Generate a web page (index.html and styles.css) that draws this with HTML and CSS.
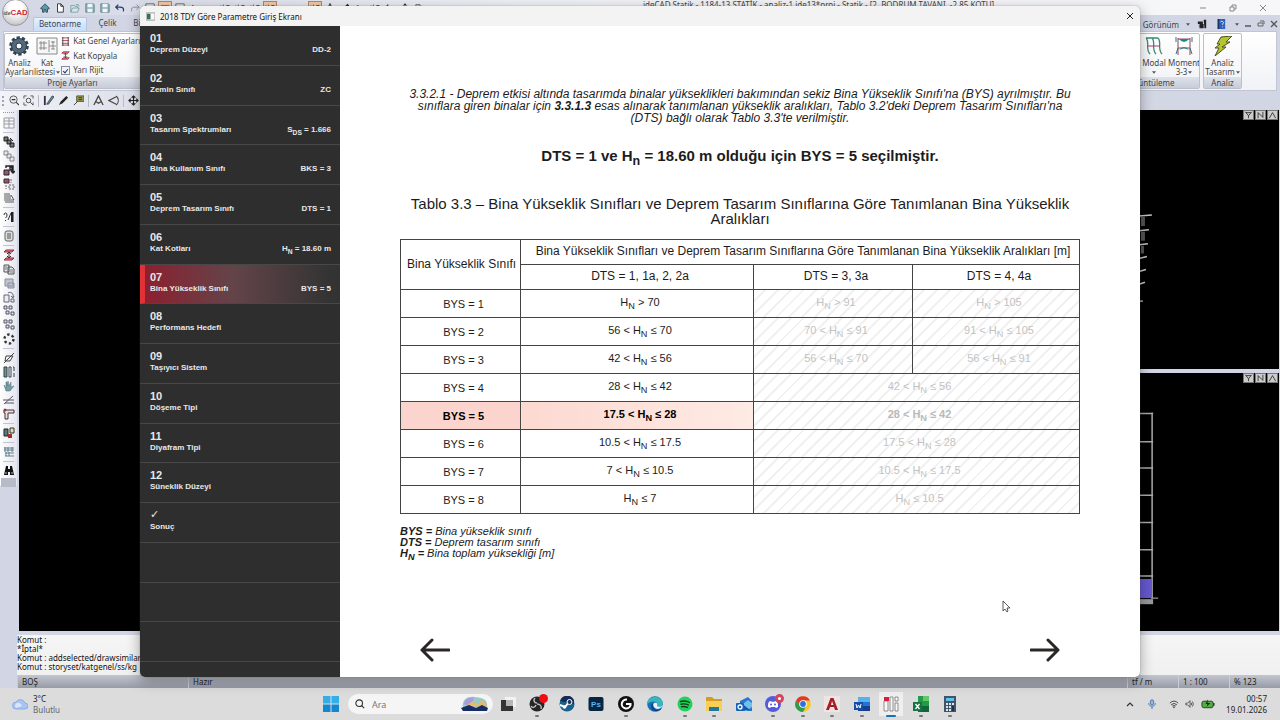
FILE: index.html
```html
<!DOCTYPE html>
<html lang="tr">
<head>
    <meta charset="UTF-8">
    <meta name="viewport" content="width=device-width, initial-scale=1.0">
    <title>2018 TDY Göre Parametre Giriş Ekranı</title>
    <link rel="stylesheet" href="styles.css">
</head>
<body>
    <svg class="sprite" aria-hidden="true">
        <symbol id="caret" viewBox="0 0 6 4"><path d="M0 0h6L3 4z" fill="#555"/></symbol>
        <symbol id="home" viewBox="0 0 12 12"><path d="M1 6 6 1l5 5v1H9v4H7V8H5v3H3V7H1z" fill="#5f9aa5" stroke="#25475a"/></symbol>
        <symbol id="page" viewBox="0 0 12 12"><path d="M3 1h4l3 3v7H3zM7 1v3h3" fill="#fff" stroke="#222"/></symbol>
        <symbol id="open" viewBox="0 0 12 12"><path d="M1 11V3h4l1 1h3v2M1 11l2-5h8l-2 5zM7 2h3l1 2" fill="#d5e7e8" stroke="#739aa0"/></symbol>
        <symbol id="save" viewBox="0 0 12 12"><path d="M1 1h9l1 1v9H1z" fill="#8eb5ba" stroke="#547a82"/><path d="M3 1h6v4H3zM3 7h6v4H3z" fill="#eef5f6"/></symbol>
        <symbol id="undo" viewBox="0 0 12 12"><path d="M4 2 1 5l3 3M1 5h5c3 0 5 1 4 5" fill="none" stroke="#263d6e" stroke-width="1.5"/></symbol>
        <symbol id="redo" viewBox="0 0 12 12"><path d="M8 2l3 3-3 3M11 5H6c-3 0-5 1-4 5" fill="none" stroke="#8b92a3" stroke-width="1.2"/></symbol>
        <symbol id="box" viewBox="0 0 12 12"><path d="M1 1h10v10H1z" fill="#eceef4" stroke="#555"/><path d="M3 8l3-4 3 3" fill="none" stroke="#666"/></symbol>
        <symbol id="beam" viewBox="0 0 12 12"><path d="M1 3h10v3H1z" fill="#3a1c18"/><path d="M2 7v4M10 7v4" stroke="#333"/></symbol>
        <symbol id="arrow" viewBox="0 0 12 12"><path d="M0 7h11M8 4l3 3-3 3" fill="none" stroke="#722" stroke-width="1.5"/></symbol>
        <symbol id="corner" viewBox="0 0 12 12"><path d="M3 3v7h8M3 3l2 2" fill="none" stroke="#333" stroke-width="1.4"/></symbol>
        <symbol id="dims" viewBox="0 0 12 12"><path d="M1 3v6M4 2v7M0 6h6M8 3h3v5H8z" fill="none" stroke="#344"/></symbol>
        <symbol id="sheet" viewBox="0 0 12 12"><path d="M1 1h10v10H1zM1 4h10M1 7h10M6 1v10" fill="#f7f7f9" stroke="#9a9ca4"/></symbol>
        <symbol id="cubes" viewBox="0 0 12 12"><path d="M1 1h4v4H1zM4 4h4v4H4zM7 7h4v4H7z" fill="#777" stroke="#222"/><path d="M7 2l3 3" stroke="#222"/></symbol>
        <symbol id="cubes-light" viewBox="0 0 12 12"><path d="M1 1h4v4H1zM4 4h4v4H4zM7 7h4v4H7z" fill="#e6e8ee" stroke="#888"/></symbol>
        <symbol id="shift" viewBox="0 0 12 12"><path d="M1 6h5v5H1z" fill="#957" stroke="#222"/><path d="M3 4V2h7v7M8 7l2 2 2-2M7 3h2v3H7z" fill="none" stroke="#222" stroke-width="1.4"/></symbol>
        <symbol id="mirror" viewBox="0 0 12 12"><path d="M1 1h5v4H1z" fill="#a45060" stroke="#333"/><path d="M6 7h5v4H6zM8 1v4M3 7v4" fill="#e8e8ee" stroke="#666" stroke-dasharray="2 1"/></symbol>
        <symbol id="lines" viewBox="0 0 12 12"><path d="M1 2h6M1 4h7M1 6h7M1 8h10M2 10h9" fill="none" stroke="#333" stroke-width=".8"/><path d="M8 3l3 5" stroke="#555"/></symbol>
        <symbol id="query" viewBox="0 0 12 12"><path d="M1 4q0-2 1.500-2T4 4 2.500 7M2.500 9v1M8 2 5 9" fill="none" stroke="#333"/><path d="M8 1h2v10H8z" fill="#222"/><path d="M10 1h1v10h-1z" fill="#8c8d34"/></symbol>
        <symbol id="scroll" viewBox="0 0 12 12"><rect x="2" y="1" width="8" height="10" rx="2" fill="#ddd" stroke="#666"/><path d="M4 4h4M4 6h4M4 8h4" stroke="#555"/></symbol>
        <symbol id="storey" viewBox="0 0 12 12"><path d="M3 1h8L9 3H1zM3 9h8l-2 2H1z" fill="#e08090" stroke="#a22438"/><path d="M6 3v6M4 5l2-2 2 2M4 7l2 2 2-2" fill="none" stroke="#333"/></symbol>
        <symbol id="copy" viewBox="0 0 12 12"><path d="M1 2h5v7H1zM5 4h4l2 2v5H5z" fill="#e4e6ec" stroke="#555"/><path d="M2 4h2M2 6h2M7 7h3M7 9h3" stroke="#777"/></symbol>
        <symbol id="copy-dim" viewBox="0 0 12 12"><path d="M2 2h8v7H2zM5 6h6v5H5z" fill="#bfc3ce" stroke="#8b90a0"/></symbol>
        <symbol id="rotate" viewBox="0 0 12 12"><path d="M1 4h5v7H1z" fill="#ececf2" stroke="#667"/><path d="M5 2c3-2 6 1 5 4M8 5l2 2 1-2M8 8h3v3H8z" fill="none" stroke="#667"/></symbol>
        <symbol id="array" viewBox="0 0 12 12"><path d="M1 1h3v3H1zM6 1h3v3H6zM3 6h3v3H3zM8 7h3v3H8z" fill="#dfe2e9" stroke="#556"/></symbol>
        <symbol id="ring" viewBox="0 0 12 12"><circle cx="6" cy="6" r="4.500" fill="none" stroke="#333" stroke-width="2.400" stroke-dasharray="2.400 2.300"/></symbol>
        <symbol id="trim" viewBox="0 0 12 12"><path d="M1 11 11 1M3 4h7L7 9H2z" fill="none" stroke="#444"/></symbol>
        <symbol id="panel" viewBox="0 0 12 12"><path d="M1 1h3v10H1z" fill="#739090" stroke="#344"/><path d="M6 1h2v10H6zM10 1h1v4M11 7v4" fill="#fff" stroke="#344"/></symbol>
        <symbol id="hand" viewBox="0 0 12 12"><path d="M1 5 3 8V2h1v4l1-5 1 5 2-4v5l3-1-4 5H3z" fill="#799ca3" stroke="#4b7078" stroke-width=".5"/></symbol>
        <symbol id="extend" viewBox="0 0 12 12"><path d="M1 10 10 2M0 6h11M2 9h9" fill="none" stroke="#556"/></symbol>
        <symbol id="tee" viewBox="0 0 12 12"><path d="M1 2h10v3H5v6H2V5H1z" fill="#eadde0" stroke="#433"/><circle cx="2" cy="2" r="1.500" fill="#a03848"/></symbol>
        <symbol id="render" viewBox="0 0 12 12"><path d="M1 2h4v7H1z" fill="#557b7d" stroke="#222"/><path d="M7 1h4v5H7z" fill="#dedfad" stroke="#333"/><path d="M5 7h4v4H5z" fill="#9b3024"/></symbol>
        <symbol id="metraj" viewBox="0 0 12 12"><path d="M1 2h10M1 4h10M2 7h9M2 10h9M2 1v5M5 1v5M9 1v5M3 6v4M6 6v4" stroke="#52757f" stroke-width=".9"/></symbol>
        <symbol id="find" viewBox="0 0 12 12"><path d="M3 1h2v3h2V1h2l2 9H7V7H5v3H1z" fill="#111"/><path d="M2 8h2M8 8h2" stroke="#bbb"/></symbol>
        <symbol id="zoom" viewBox="0 0 12 12"><circle cx="6" cy="5" r="4" fill="#e8ebf2" stroke="#555"/><path d="M9 8l3 3M4 5h4" stroke="#333" stroke-width="1.200"/></symbol>
        <symbol id="zoom-all" viewBox="0 0 12 12"><path d="M1 4V1h3M8 1h3v3M11 8v3M1 8v3h3" fill="none" stroke="#555"/><circle cx="6" cy="6" r="2.500" fill="none" stroke="#444"/><path d="M8 8l3 3" stroke="#444"/></symbol>
        <symbol id="pens" viewBox="0 0 12 12"><path d="M1 1h2v10H1z" fill="#334"/><path d="M4 10 10 1l2 1-6 8z" fill="#688" stroke="#223" stroke-width=".7"/></symbol>
        <symbol id="pen" viewBox="0 0 12 12"><path d="M1 11 3 7l6-6 2 2-6 6z" fill="#222"/></symbol>
        <symbol id="note" viewBox="0 0 12 12"><path d="M4 1h8v6H4z" fill="#9a9b42" stroke="#555"/><path d="M5 7 1 11M6 3h4M6 5h4" stroke="#333"/></symbol>
        <symbol id="compass" viewBox="0 0 12 12"><path d="M1 11 6 1l5 10M3 7l3 2 3-2" fill="none" stroke="#444" stroke-width="1.400"/></symbol>
        <symbol id="angle" viewBox="0 0 12 12"><path d="M9 2 1 6l8 4M9 1c3 3 3 7 0 10" fill="none" stroke="#444" stroke-width="1.200"/></symbol>
        <symbol id="move" viewBox="0 0 12 12"><path d="M6 1v10M1 6h10M4 3l2-2 2 2M4 9l2 2 2-2M3 4 1 6l2 2M9 4l2 2-2 2" fill="none" stroke="#222" stroke-width="1.200"/></symbol>
    </svg>

    <div class="desktop">
        <div class="app">
            <header class="app-title">
                <div class="quick">
                    <button class="orb" aria-label="ideCAD menüsü"><small>ide</small>CAD</button>
                    <button aria-label="Başlangıç"><svg><use href="#home"/></svg></button>
                    <button aria-label="Yeni"><svg><use href="#page"/></svg></button>
                    <button aria-label="Aç"><svg><use href="#open"/></svg></button>
                    <button aria-label="Kaydet"><svg><use href="#save"/></svg></button>
                    <button aria-label="Tümünü kaydet"><svg><use href="#save"/></svg></button>
                    <button aria-label="Geri al"><svg><use href="#undo"/></svg></button>
                    <button aria-label="Yinele"><svg><use href="#redo"/></svg></button>
                    <button aria-label="Görünüm"><svg><use href="#box"/></svg></button>
                    <button class="on" aria-label="Kiriş"><svg><use href="#beam"/></svg></button>
                    <button aria-label="Çerçeve"><svg><use href="#box"/></svg></button>
                    <button aria-label="Köşe"><svg><use href="#corner"/></svg></button>
                    <button aria-label="Ok"><svg><use href="#arrow"/></svg></button>
                    <button aria-label="Ölçü"><svg><use href="#dims"/></svg></button>
                    <button aria-label="Ölçü 2"><svg><use href="#dims"/></svg></button>
                    <button aria-label="Ölçü 3"><svg><use href="#dims"/></svg></button>
                    <button class="on" aria-label="Kesit"><svg><use href="#dims"/></svg></button>
                    <button aria-label="Sol"><svg><use href="#arrow"/></svg></button>
                    <button aria-label="Sağ"><svg><use href="#arrow"/></svg></button>
                    <button class="on" aria-label="Aks"><svg><use href="#dims"/></svg></button>
                    <button aria-label="Açı"><svg><use href="#compass"/></svg></button>
                    <button aria-label="Kalem"><svg><use href="#pen"/></svg></button>
                    <button aria-label="Köşe 2"><svg><use href="#corner"/></svg></button>
                    <button aria-label="Ölçü 4"><svg><use href="#dims"/></svg></button>
                    <button aria-label="Döndür"><svg><use href="#undo"/></svg></button>
                    <button aria-label="Taşı"><svg><use href="#move"/></svg></button>
                    <button aria-label="Kopyala"><svg><use href="#copy"/></svg></button>
                </div>
                <span class="doc-name">ideCAD Statik - 1184-13 STATİK - analiz-1.ide13*proj - Statik - [2. BODRUM TAVANI, -2.85 KOTU]</span>
                <div class="win-buttons">
                    <button aria-label="Simge durumuna küçült"><svg viewBox="0 0 8 8"><path d="M1 4h6"/></svg></button>
                    <button aria-label="Geri yükle"><svg viewBox="0 0 8 8"><path d="M1 3h4v4H1zM3 3V1h4v4H5"/></svg></button>
                    <button aria-label="Kapat"><svg viewBox="0 0 8 8"><path d="M1 1l6 6M7 1 1 7"/></svg></button>
                </div>
            </header>

            <nav class="tabs">
                <button class="tab active">Betonarme</button>
                <button class="tab">Çelik</button>
                <button class="tab">Birleşim</button>
                <div class="tabs-right">
                    <svg class="caret"><use href="#caret"/></svg>
                    <button>Görünüm</button>
                    <svg class="caret"><use href="#caret"/></svg>
                    <svg class="i10" viewBox="0 0 12 12"><path d="M1 3h6v3H1zM3 6h5v5H3zM8 1h3v10H9z" fill="#222"/><path d="M2 8l2 2" stroke="#a33"/></svg>
                    <svg class="i10" viewBox="0 0 12 12"><path d="M2 0h9v12H2z" fill="#2f62bd"/><path d="M2 0h2v12H2z" fill="#173468"/><path d="M5 4q1-2 3-1t0 3v1M8 9v1" fill="none" stroke="#fff"/></svg>
                    <svg class="caret"><use href="#caret"/></svg>
                    <svg class="i8" viewBox="0 0 8 8"><path d="M1 6h6" stroke="#555" stroke-width="1.500"/></svg>
                    <svg class="i8" viewBox="0 0 8 8"><path d="M1 3h5v3H1zM3 1h4v3" fill="none" stroke="#666"/></svg>
                    <svg class="i8" viewBox="0 0 8 8"><path d="M1 1l6 6M7 1 1 7" stroke="#555" stroke-width="1.300"/></svg>
                </div>
            </nav>

            <div class="ribbon">
                <section class="group project">
                    <div class="group-body">
                        <button class="big">
                            <svg viewBox="0 0 20 20"><circle cx="10" cy="10" r="8.500" fill="none" stroke="#34424f" stroke-width="2.500" stroke-dasharray="3.300 2.040"/><circle cx="10" cy="10" r="7.500" fill="#52687b" stroke="#2e3d4b"/><circle cx="10" cy="10" r="3" fill="#f3f5f8" stroke="#2b3947"/></svg>
                            <span>Analiz<br>Ayarları</span>
                        </button>
                        <button class="big">
                            <svg class="wide" viewBox="0 0 22 20"><path d="M1 2h20v16H1z" fill="#f6f6f8" stroke="#888"/><path d="M3 7h8M3 12h8M5 5v9M8 5v9M13 4v12M13 10h7M15 6h4M15 13h4M17 5v8" stroke="#777" stroke-width=".8"/></svg>
                            <span>Kat<br>listesi<svg class="caret"><use href="#caret"/></svg></span>
                        </button>
                        <div class="small-list">
                            <button><svg viewBox="0 0 10 10"><path d="M1 1h8M1 4h8M1 7h8M1 9h8" stroke="#a73c50"/><path d="M2 0v10M8 0v10" stroke="#444"/></svg>Kat Genel Ayarları</button>
                            <button><svg><use href="#storey"/></svg>Kat Kopyala</button>
                            <label><input type="checkbox" checked>Yarı Rijit</label>
                        </div>
                    </div>
                    <h2>Proje Ayarları</h2>
                </section>
                <section class="group display">
                    <div class="group-body">
                        <button class="big">
                            <svg viewBox="0 0 20 20"><path d="M2 2c4 4-1 11 4 16M8 2c4 4-1 11 4 16M14 2c4 4-1 11 4 16M2 2h12" fill="none" stroke="#3b8a72" stroke-width="1.300"/><path d="M4 10h12" stroke="#a8367c" stroke-width="1.200"/></svg>
                            <span>Modal<br><svg class="caret"><use href="#caret"/></svg></span>
                        </button>
                        <button class="big">
                            <svg viewBox="0 0 20 20"><path d="M4 2v17M16 2v17M4 3h12M4 12h12" stroke="#8a4a58"/><path d="M5 3h10q-5 6-10 0zM5 14q5-6 10 0l-5-2z" fill="#168b91"/><path d="M2 1v5M18 1v5M2 18l2-6M18 18l-2-6" stroke="#366f84"/></svg>
                            <span>Moment<br>3-3<svg class="caret"><use href="#caret"/></svg></span>
                        </button>
                    </div>
                    <h2>Görüntüleme</h2>
                </section>
                <section class="group analysis">
                    <div class="group-body">
                        <button class="big">
                            <svg viewBox="0 0 20 20"><path d="M8 1 19 0l-6 6h4L9 11h4L2 20l4-8H2l5-4H4z" fill="#b5c52f" stroke="#4a5121"/></svg>
                            <span>Analiz<br>Tasarım<svg class="caret"><use href="#caret"/></svg></span>
                        </button>
                    </div>
                    <h2>Analiz</h2>
                </section>
            </div>

            <div class="toolbar">
                <i class="grip"></i>
                <button aria-label="Yakınlaştır"><svg><use href="#zoom"/></svg></button>
                <button aria-label="Tümünü göster"><svg><use href="#zoom-all"/></svg></button>
                <i class="line"></i>
                <button aria-label="Kalemler"><svg><use href="#pens"/></svg></button>
                <button aria-label="Kalem"><svg><use href="#pen"/></svg></button>
                <button aria-label="Not"><svg><use href="#note"/></svg></button>
                <i class="line"></i>
                <button aria-label="Pergel"><svg><use href="#compass"/></svg></button>
                <button aria-label="Açı"><svg><use href="#angle"/></svg></button>
                <i class="line"></i>
                <button aria-label="Taşı"><svg><use href="#move"/></svg></button>
            </div>

            <div class="workspace">
                <aside class="dock">
                    <div class="dock-tools">
                        <i class="dots"></i>
                        <button aria-label="Tablo"><svg><use href="#sheet"/></svg></button>
                        <hr>
                        <button aria-label="Kopyala"><svg><use href="#cubes"/></svg></button>
                        <button aria-label="Çoğalt"><svg><use href="#cubes-light"/></svg></button>
                        <button aria-label="Ötele"><svg><use href="#shift"/></svg></button>
                        <button aria-label="Aynala"><svg><use href="#mirror"/></svg></button>
                        <button aria-label="Çizgiler"><svg><use href="#lines"/></svg></button>
                        <hr>
                        <button aria-label="Sorgula"><svg><use href="#query"/></svg></button>
                        <hr>
                        <button aria-label="Rapor"><svg><use href="#scroll"/></svg></button>
                        <hr>
                        <button aria-label="Kat"><svg><use href="#storey"/></svg></button>
                        <button aria-label="Kopya"><svg><use href="#copy"/></svg></button>
                        <button aria-label="Yapıştır"><svg><use href="#copy-dim"/></svg></button>
                        <button aria-label="Döndür"><svg><use href="#rotate"/></svg></button>
                        <button aria-label="Dizi"><svg><use href="#array"/></svg></button>
                        <button aria-label="Dizi 2"><svg><use href="#array"/></svg></button>
                        <button aria-label="Dairesel dizi"><svg><use href="#ring"/></svg></button>
                        <hr>
                        <button aria-label="Buda"><svg><use href="#trim"/></svg></button>
                        <button aria-label="Panel"><svg><use href="#panel"/></svg></button>
                        <button aria-label="Tut"><svg><use href="#hand"/></svg></button>
                        <button aria-label="Uzat"><svg><use href="#extend"/></svg></button>
                        <button aria-label="Birleştir"><svg><use href="#tee"/></svg></button>
                        <hr>
                        <button aria-label="Görselleştir"><svg><use href="#render"/></svg></button>
                        <hr>
                        <button aria-label="Metraj"><svg><use href="#metraj"/></svg></button>
                        <hr>
                        <button aria-label="Bul"><svg><use href="#find"/></svg></button>
                        <i class="dock-end"></i>
                    </div>
                </aside>
                <div class="work-main">
                    <div class="views">
                        <div class="view plan"></div>
                        <div class="view-col">
                            <div class="view">
                                <div class="view-buttons">
                                    <button aria-label="Üst"><svg viewBox="0 0 10 10"><path d="M1 1l4 5 4-5M5 6v3M2 2h6"/></svg></button>
                                    <button aria-label="Ön"><svg viewBox="0 0 10 10"><path d="M2 9V2l6 6V1"/></svg></button>
                                    <button aria-label="Yan"><svg viewBox="0 0 10 10"><path d="M1 9l4-7 4 7"/></svg></button>
                                </div>
                                <svg class="drawing" viewBox="0 0 30 261"><path d="M2 108h4v9H2zM2 123h4v9H2zM2 137h3v8H2z" fill="#555"/><path d="M0 107l13-1M0 122l10-1M0 136l9-1M0 150l8-2M0 163l7-2M0 176l6-2M0 193h4" stroke="#c9c9c9" stroke-width="1.500"/></svg>
                            </div>
                            <div class="view">
                                <div class="view-buttons">
                                    <button aria-label="Üst"><svg viewBox="0 0 10 10"><path d="M1 1l4 5 4-5M5 6v3M2 2h6"/></svg></button>
                                    <button aria-label="Ön"><svg viewBox="0 0 10 10"><path d="M2 9V2l6 6V1"/></svg></button>
                                    <button aria-label="Yan"><svg viewBox="0 0 10 10"><path d="M1 9l4-7 4 7"/></svg></button>
                                </div>
                                <svg class="drawing" viewBox="0 0 30 256"><path d="M13 39v184M0 40h14M0 68h14M0 94h14M0 121h14M0 148h14M0 175h14M0 201h14" stroke="#aaa" stroke-width="1.500"/><path d="M0 204h12v19H0z" fill="#6458cf"/><path d="M0 224h14v5H0z" fill="#999"/><path d="M12 223h7" stroke="#bbb"/></svg>
                            </div>
                        </div>
                    </div>
                    <pre class="command">Komut :
*İptal*
Komut : addselected/drawsimilar/be
Komut : storyset/katgenel/ss/kg</pre>
                    <footer class="status">
                        <span class="snap">BOŞ</span>
                        <span class="ready">Hazır</span>
                        <span>tf / m</span>
                        <span>1 : 100</span>
                        <span>% 123</span>
                    </footer>
                </div>
            </div>
        </div>

        <footer class="taskbar">
            <div class="weather">
                <svg viewBox="0 0 16 12"><path d="M4 11a3.500 3.500 0 0 1 0-7 5 5 0 0 1 9 1 3 3 0 0 1 0 6z" fill="#a9c4f0" stroke="#7c9cdc" stroke-width=".7"/><path d="M4 10a3 3 0 0 1 1-5 4 4 0 0 1 5 3" fill="#d8e6fb"/></svg>
                <div><strong>3°C</strong><br>Bulutlu</div>
            </div>
            <div class="task-center">
                <button class="start" aria-label="Başlat"><svg viewBox="0 0 16 16"><path d="M0 0h7.500v7.500H0zM8.500 0H16v7.500H8.500z" fill="#35aee8"/><path d="M0 8.500h7.500V16H0zM8.500 8.500H16V16H8.500z" fill="#1487d4"/></svg></button>
                <div class="search">
                    <svg viewBox="0 0 12 12"><circle cx="5" cy="5" r="4" fill="none" stroke="#333" stroke-width="1.300"/><path d="M8 8l3 3" stroke="#333" stroke-width="1.300"/></svg>
                    <input type="text" placeholder="Ara" aria-label="Ara">
                    <svg class="scene" viewBox="0 0 28 16"><path d="M2 13C0 2 8 0 14 1s14 1 12 12z" fill="#9bc9c6"/><path d="M3 8C4 2 9 1 13 2l-3 8z" fill="#a99be0"/><path d="M5 10l7-5 4 4 6-5 4 7z" fill="#e7ba69"/><path d="M0 12l8-3 7 3 6-3 6 3-1 3H2z" fill="#172d67"/></svg>
                </div>
                <div class="tasks">
                    <button aria-label="Görev görünümü"><svg viewBox="0 0 16 16"><path d="M5 1h11v10H5z" fill="#f2f2f2"/><path d="M1 4h5v6h7v5H1z" fill="#333"/><path d="M6 4h7v6H6z" fill="#b5b5b5"/></svg></button>
                    <button class="open" aria-label="OBS"><svg viewBox="0 0 16 16"><circle cx="8" cy="8" r="7.500" fill="#252528"/><path d="M8 7c-3 0-4-3-2-5M8 8c3 0 5 2 4 5M7 9c-1 3-4 3-5 1" fill="none" stroke="#bbb" stroke-width="1.500"/></svg><i class="badge rec"></i></button>
                    <button aria-label="Steam"><svg viewBox="0 0 16 16"><circle cx="8" cy="8" r="7.500" fill="#17618e"/><path d="M1 5a7.500 7.500 0 0 1 14-1v4z" fill="#152d54"/><path d="M1 9l5 2 4-5" fill="none" stroke="#fff" stroke-width="2"/><circle cx="10.500" cy="6" r="2.500" fill="#17395f" stroke="#fff"/><circle cx="5.500" cy="11" r="1.800" fill="#fff"/></svg></button>
                    <button aria-label="Photoshop"><svg viewBox="0 0 16 16"><rect x=".5" y="1" width="15" height="14" rx="2" fill="#062643"/><text x="8" y="11" class="ps">Ps</text></svg></button>
                    <button class="open" aria-label="Logitech G"><svg viewBox="0 0 16 16"><circle cx="8" cy="8" r="8" fill="#111"/><path d="M9 3.500a4.500 4.500 0 1 0 3.500 6V8H8" fill="none" stroke="#fff" stroke-width="2"/></svg></button>
                    <button aria-label="Edge"><svg viewBox="0 0 16 16"><circle cx="8" cy="8" r="7.800" fill="#1672ba"/><path d="M0 8C0 0 14-2 16 7c0 4-5 4-6 3 2-4-4-7-10-2z" fill="#39b7b8"/><path d="M6 9c0 5 5 6 9 3-3 5-11 4-11-2 0-2 2-3 3-3z" fill="#0c458d"/><path d="M10 10c1-2 0-4-3-3-2 2 0 5 3 6 3 0 5-2 6-4-2 2-4 2-6 1z" fill="#e6f2f6"/></svg></button>
                    <button class="open" aria-label="Spotify"><svg viewBox="0 0 16 16"><circle cx="8" cy="8" r="7.500" fill="#20d15b"/><path d="M3.500 5.500q5-1.500 9 1M4 8.200q4-1 7.500.8M4.500 10.700q3-.7 6 .7" fill="none" stroke="#153a20" stroke-width="1.400" stroke-linecap="round"/></svg></button>
                    <button class="open" aria-label="Dosya Gezgini"><svg viewBox="0 0 16 16"><path d="M0 1h6l2 2h8v12H0z" fill="#d49c25"/><path d="M0 5h16v10H0z" fill="#f8cf55"/><path d="M3 11h10v4H3z" fill="#24769f"/></svg></button>
                    <button aria-label="Outlook"><svg viewBox="0 0 16 16"><path d="M4 5l8-4 4 4v10H4z" fill="#2477cc"/><path d="M4 10l8-6 4 3v4l-6 4z" fill="#72bfef"/><path d="M4 6l10 8H4z" fill="#1d54a4"/><rect y="7" width="8" height="8" rx="1" fill="#1263b7"/><circle cx="4" cy="11" r="2" fill="none" stroke="#fff" stroke-width="1.300"/></svg></button>
                    <button class="open" aria-label="Discord"><svg viewBox="0 0 16 16"><circle cx="8" cy="8" r="8" fill="#565bd8"/><path d="M3 11c0-3 0-5 2-6l2 .7h2L11 5c2 1 2 3 2 6l-2 1-1-1H6l-1 1z" fill="#fff"/><circle cx="6" cy="8.500" r="1" fill="#565bd8"/><circle cx="10" cy="8.500" r="1" fill="#565bd8"/></svg><i class="badge ring"></i></button>
                    <button class="open" aria-label="Chrome"><svg viewBox="0 0 16 16"><circle cx="8" cy="8" r="7.800" fill="#f4c62c"/><path d="M1 4.500A7.800 7.800 0 0 1 15 4.500H8L5 10z" fill="#db3c2f"/><path d="M1 4.500A7.800 7.800 0 0 0 8 16l3-6-5 1z" fill="#2b9d4c"/><circle cx="8" cy="8" r="3.800" fill="#fff"/><circle cx="8" cy="8" r="2.900" fill="#2f70df"/></svg></button>
                    <button class="open" aria-label="AutoCAD"><svg viewBox="0 0 16 16"><path d="M0 0h16v16H0z" fill="#eee4e3"/><path d="M2 14 6.500 2h3L14 14h-3l-1-3H6l-1 3zm5-5h2.500L8 5z" fill="#a61d26"/></svg></button>
                    <button class="open" aria-label="Word"><svg viewBox="0 0 16 16"><path d="M4 1h12v14H4z" fill="#2274cc"/><path d="M4 1h12v5H4z" fill="#55b1ef"/><path d="M4 10h12v5H4z" fill="#173f91"/><path d="M0 6h9v8H0z" fill="#164ea6"/><path d="M2 8l1 4 1.500-3L6 12l1-4" fill="none" stroke="#fff"/></svg></button>
                    <button class="open current" aria-label="ideCAD"><svg viewBox="0 0 16 16"><path d="M1 5h4v10H1zM7 1h3v14H7zM12 1h3v4h-3zM12 7h3v8h-3z" fill="#f7f7f7" stroke="#777" stroke-width=".8"/><path d="M1 1h5v4H1z" fill="#d3203b"/></svg></button>
                    <button class="open" aria-label="Excel"><svg viewBox="0 0 16 16"><path d="M5 0h11v16H5z" fill="#259b48"/><path d="M10 0h6v5h-6z" fill="#61c966"/><path d="M5 10h11v6H5z" fill="#12673a"/><path d="M0 6h9v9H0z" fill="#147540"/><path d="M2.500 8l4 5M6.500 8l-4 5" stroke="#fff" stroke-width="1.300"/></svg></button>
                    <button class="open" aria-label="Hesap Makinesi"><svg viewBox="0 0 16 16"><path d="M2 0h12v16H2z" fill="#405568"/><path d="M4 2h8v3H4z" fill="#5cc4ec"/><path d="M4 7h2v2H4zM7 7h2v2H7zM10 7h2v2h-2zM4 10h2v2H4zM7 10h2v2H7zM4 13h2v2H4zM7 13h2v2H7z" fill="#dce6ec"/><path d="M10 10h2v5h-2z" fill="#1c3050"/></svg></button>
                </div>
            </div>
            <div class="tray">
                <svg viewBox="0 0 10 10"><path d="M2 7l3-3 3 3" fill="none" stroke="#333" stroke-width="1.200"/></svg>
                <svg class="mic" viewBox="0 0 10 12"><rect x="3" y="1" width="4" height="6" rx="2" fill="#9bb9e4" stroke="#3766a8"/><path d="M1 5c0 5 8 5 8 0M5 9v3" fill="none" stroke="#3766a8"/></svg>
                <svg viewBox="0 0 12 10"><path d="M1 4q5-5 10 0M2.500 6q3.500-3.500 7 0M4 7.500q2-1.500 4 0" fill="none" stroke="#333"/><circle cx="6" cy="9" r="1" fill="#333"/></svg>
                <svg viewBox="0 0 12 10"><path d="M1 4h2l3-3v8L3 6H1zM7.500 3.500q1 1.500 0 3M9 2q2 3 0 6" fill="none" stroke="#444"/></svg>
                <svg class="battery" viewBox="0 0 15 10"><rect x="1" y="2" width="12" height="7" rx="2" fill="#4bb43d" stroke="#333"/><path d="M13 4h1.500v3H13z" fill="#333"/><path d="M7 0 5 5h2L6 8l4-4H7z" fill="#222"/></svg>
                <time datetime="2026-01-19T00:57">00:57<br>19.01.2026</time>
            </div>
        </footer>

        <div class="dialog" role="dialog" aria-labelledby="dialogTitle">
            <div class="dialog-title">
                <svg viewBox="0 0 10 10"><path d="M0 1h10v8H0z" fill="#f9f9f9" stroke="#999"/><path d="M1 2h4v6H1z" fill="#35705d"/></svg>
                <span id="dialogTitle">2018 TDY Göre Parametre Giriş Ekranı</span>
                <button aria-label="Kapat"><svg viewBox="0 0 8 8"><path d="M1 1l6 6M7 1 1 7" stroke="#222"/></svg></button>
            </div>
            <div class="dialog-body">
                <nav class="steps">
                    <a href="#s1"><b>01</b><span>Deprem Düzeyi</span><em>DD-2</em></a>
                    <a href="#s2"><b>02</b><span>Zemin Sınıfı</span><em>ZC</em></a>
                    <a href="#s3"><b>03</b><span>Tasarım Spektrumları</span><em>S<sub>DS</sub> = 1.666</em></a>
                    <a href="#s4"><b>04</b><span>Bina Kullanım Sınıfı</span><em>BKS = 3</em></a>
                    <a href="#s5"><b>05</b><span>Deprem Tasarım Sınıfı</span><em>DTS = 1</em></a>
                    <a href="#s6"><b>06</b><span>Kat Kotları</span><em>H<sub>N</sub> = 18.60 m</em></a>
                    <a href="#s7" class="active"><b>07</b><span>Bina Yükseklik Sınıfı</span><em>BYS = 5</em></a>
                    <a href="#s8"><b>08</b><span>Performans Hedefi</span></a>
                    <a href="#s9"><b>09</b><span>Taşıyıcı Sistem</span></a>
                    <a href="#s10"><b>10</b><span>Döşeme Tipi</span></a>
                    <a href="#s11"><b>11</b><span>Diyafram Tipi</span></a>
                    <a href="#s12"><b>12</b><span>Süneklik Düzeyi</span></a>
                    <a href="#s13"><b class="tick">✓</b><span>Sonuç</span></a>
                    <div></div>
                    <div></div>
                    <div></div>
                </nav>
                <main class="content">
                    <p class="intro">3.3.2.1 - Deprem etkisi altında tasarımda binalar yükseklikleri bakımından sekiz Bina Yükseklik Sınıfı'na (BYS) ayrılmıştır. Bu sınıflara giren binalar için <b>3.3.1.3</b> esas alınarak tanımlanan yükseklik aralıkları, Tablo 3.2'deki Deprem Tasarım Sınıfları'na (DTS) bağlı olarak Tablo 3.3'te verilmiştir.</p>
                    <h1>DTS = 1 ve H<sub>n</sub> = 18.60 m olduğu için BYS = 5 seçilmiştir.</h1>
                    <table>
                        <caption>Tablo 3.3 – Bina Yükseklik Sınıfları ve Deprem Tasarım Sınıflarına Göre Tanımlanan Bina Yükseklik Aralıkları</caption>
                        <colgroup>
                            <col class="c1"><col class="c2"><col class="c3"><col class="c4">
                        </colgroup>
                        <thead>
                            <tr><th rowspan="2" class="first">Bina Yükseklik Sınıfı</th><th colspan="3">Bina Yükseklik Sınıfları ve Deprem Tasarım Sınıflarına Göre Tanımlanan Bina Yükseklik Aralıkları [m]</th></tr>
                            <tr><th>DTS = 1, 1a, 2, 2a</th><th>DTS = 3, 3a</th><th>DTS = 4, 4a</th></tr>
                        </thead>
                        <tbody>
                            <tr><td>BYS = 1</td><td>H<sub>N</sub> &gt; 70</td><td class="off">H<sub>N</sub> &gt; 91</td><td class="off">H<sub>N</sub> &gt; 105</td></tr>
                            <tr><td>BYS = 2</td><td>56 &lt; H<sub>N</sub> ≤ 70</td><td class="off">70 &lt; H<sub>N</sub> ≤ 91</td><td class="off">91 &lt; H<sub>N</sub> ≤ 105</td></tr>
                            <tr><td>BYS = 3</td><td>42 &lt; H<sub>N</sub> ≤ 56</td><td class="off">56 &lt; H<sub>N</sub> ≤ 70</td><td class="off">56 &lt; H<sub>N</sub> ≤ 91</td></tr>
                            <tr><td>BYS = 4</td><td>28 &lt; H<sub>N</sub> ≤ 42</td><td class="off" colspan="2">42 &lt; H<sub>N</sub> ≤ 56</td></tr>
                            <tr class="selected"><td>BYS = 5</td><td>17.5 &lt; H<sub>N</sub> ≤ 28</td><td class="off" colspan="2">28 &lt; H<sub>N</sub> ≤ 42</td></tr>
                            <tr><td>BYS = 6</td><td>10.5 &lt; H<sub>N</sub> ≤ 17.5</td><td class="off" colspan="2">17.5 &lt; H<sub>N</sub> ≤ 28</td></tr>
                            <tr><td>BYS = 7</td><td>7 &lt; H<sub>N</sub> ≤ 10.5</td><td class="off" colspan="2">10.5 &lt; H<sub>N</sub> ≤ 17.5</td></tr>
                            <tr><td>BYS = 8</td><td>H<sub>N</sub> ≤ 7</td><td class="off" colspan="2">H<sub>N</sub> ≤ 10.5</td></tr>
                        </tbody>
                    </table>
                    <p class="legend"><b>BYS =</b> Bina yükseklik sınıfı<br><b>DTS =</b> Deprem tasarım sınıfı<br><b>H<sub>N</sub> =</b> Bina toplam yüksekliği [m]</p>
                    <div class="pager">
                        <button aria-label="Geri"><svg viewBox="0 0 30 24"><path d="M29 12H2M12 2 2 12l10 10"/></svg></button>
                        <button aria-label="İleri"><svg viewBox="0 0 30 24"><path d="M1 12h27M18 2l10 10-10 10"/></svg></button>
                    </div>
                </main>
            </div>
        </div>
        <svg class="cursor" viewBox="0 0 9 13"><path d="M1 1v10l2-2 2 3 1-1-1-3h3z" fill="#fff" stroke="#333" stroke-width=".8"/></svg>
    </div>
</body>
</html>
```

FILE: styles.css
```css
:root {
    --chrome: #d2d6e4;
    --dark: #2e2e2e;
    --line: #444;
    --red: #e03236;
    --ui: "Noto Sans", "Open Sans", sans-serif;
    --doc: "Liberation Sans", Arial, sans-serif;
}

* {
    margin: 0;
    padding: 0;
    box-sizing: border-box;
}

body {
    font-family: var(--ui);
    font-size: 8px;
    color: #444;
}

button {
    font: inherit;
    color: inherit;
    background: none;
    border: none;
}

svg {
    display: block;
    flex: none;
}

sub {
    line-height: 0;
}

.sprite {
    display: none;
}

.desktop {
    position: relative;
    display: flex;
    flex-direction: column;
    height: 100vh;
    overflow: hidden;
}

.app {
    flex: 1;
    min-height: 0;
    display: flex;
    flex-direction: column;
    background: var(--chrome);
}

.caret {
    display: inline-block;
    width: 4px;
    height: 3px;
    margin-left: 2px;
    vertical-align: middle;
}

/* Title bar */
.app-title {
    display: flex;
    align-items: center;
    height: 15px;
    background: linear-gradient(90deg, #d3d7e5 0, #f0f1f6 520px, #f7f7f9);
}

.quick {
    display: flex;
    align-items: center;
    width: 643px;
    gap: 3px;
}

.quick svg {
    width: 10px;
    height: 10px;
    margin: 1px;
}

.quick .on {
    background: #f2c8a4;
    outline: 1px solid #b98560;
}

.quick .orb {
    position: relative;
    z-index: 1;
    width: 27px;
    height: 27px;
    margin: 10px 7px 0 2px;
    border-radius: 50%;
    border: 1px solid #999;
    background: radial-gradient(circle at 50% 30%, #fff 30%, #ccc 75%, #999);
    color: #d3263b;
    font: bold 8px var(--doc);
}

.orb small {
    color: #555;
    font-size: 5px;
}

.doc-name {
    flex: 1;
    align-self: flex-start;
    line-height: 9px;
    white-space: nowrap;
}

.win-buttons {
    display: flex;
    gap: 22px;
    padding-right: 13px;
}

.win-buttons svg {
    width: 8px;
    height: 8px;
    fill: none;
    stroke: #888;
}

/* Ribbon */
.tabs {
    display: flex;
    height: 16px;
    padding: 2px 2px 0 33px;
}

.tab {
    width: 41px;
    line-height: 10px;
    padding-bottom: 2px;
}

.tab.active {
    width: 54px;
    border: 1px solid #b2c6e4;
    border-bottom: none;
    border-radius: 2px 2px 0 0;
    background: linear-gradient(#e8effa, #c9dcf6);
    color: #35465f;
}

.tabs-right {
    display: flex;
    align-items: center;
    gap: 5px;
    margin-left: auto;
}

.i10 {
    width: 10px;
    height: 10px;
    margin: 0 2px;
}

.i8 {
    width: 8px;
    height: 8px;
}

.ribbon {
    display: flex;
    height: 60px;
    margin: 0 3px;
    padding: 1px 0;
    gap: 3px;
    border: 1px solid #c2c6d2;
    background: linear-gradient(#fff, #f1f2f6);
}

.group {
    display: flex;
    flex-direction: column;
    border: 1px solid #bcc0cc;
    border-radius: 2px;
    overflow: hidden;
}

.group h2 {
    flex: none;
    height: 11px;
    line-height: 11px;
    background: linear-gradient(#dfe2ea, #c8ccd8);
    font-size: 8px;
    font-weight: normal;
    text-align: center;
}

.group-body {
    flex: 1;
    display: flex;
    min-height: 0;
}

.project {
    width: 137px;
}

.display {
    width: 101px;
    margin-left: auto;
}

.display .group-body {
    justify-content: flex-end;
}

.analysis {
    width: 39px;
    margin-right: 34px;
}

.big {
    display: flex;
    flex-direction: column;
    align-items: center;
    width: 30px;
    padding-top: 2px;
    line-height: 9px;
    white-space: nowrap;
}

.analysis .big {
    width: 100%;
}

.big > svg {
    width: 20px;
    height: 20px;
    margin-bottom: 2px;
}

.big > .wide {
    width: 22px;
}

.big .caret {
    margin-left: 1px;
}

.small-list {
    display: flex;
    flex-direction: column;
    justify-content: space-between;
    padding: 1px 0 1px 1px;
}

.small-list button,
.small-list label {
    display: flex;
    align-items: center;
    gap: 3px;
    white-space: nowrap;
    line-height: 12px;
}

.small-list svg,
.small-list input {
    width: 9px;
    height: 9px;
}

.small-list input {
    display: grid;
    place-items: center;
    appearance: none;
    border: 1px solid #8a8fa0;
    background: #f2f3f8;
}

.small-list input:checked::before {
    content: "";
    width: 2px;
    height: 4px;
    border: solid #2c3a68;
    border-width: 0 1px 1px 0;
    transform: rotate(40deg);
}

.toolbar {
    display: flex;
    align-items: center;
    gap: 4px;
    height: 19px;
    padding-left: 2px;
    background: linear-gradient(90deg, #f2f3f8, #dcdfe9 140px, var(--chrome));
}

.toolbar svg {
    width: 11px;
    height: 11px;
}

.toolbar .line {
    width: 1px;
    height: 12px;
    background: #b6bac6;
}

.grip {
    width: 2px;
    height: 10px;
    border-left: 2px dotted #a0a5b3;
}

/* Workspace */
.workspace {
    flex: 1;
    min-height: 0;
    display: flex;
}

.dock {
    width: 17px;
}

.dock-tools {
    display: flex;
    flex-direction: column;
    padding: 2px 1px 0;
    background: linear-gradient(90deg, #fff, #e4e6ef);
    border-radius: 0 0 3px 3px;
}

.dock-tools button {
    padding: 1px 2px;
}

.dock-tools svg {
    width: 12px;
    height: 12px;
}

.dock-tools hr {
    height: 1px;
    margin: 2px;
    border: none;
    background: #c2c5cf;
}

.dots {
    height: 4px;
    margin: 0 2px;
    border-top: 1px dotted #999;
}

.dock-end {
    height: 9px;
    background: #b7bbc8;
}

.work-main {
    flex: 1;
    min-width: 0;
    display: flex;
    flex-direction: column;
}

.views {
    flex: 1;
    display: flex;
    margin: 0 1px 0 2px;
}

.view-col {
    width: 140px;
    display: flex;
    flex-direction: column;
    gap: 4px;
}

.view {
    position: relative;
    flex: 1;
    background: #000;
}

.view-buttons {
    display: flex;
    justify-content: flex-end;
    gap: 1px;
    padding-right: 1px;
}

.view-buttons button {
    background: #ccc;
    border: 1px solid #777;
}

.view-buttons svg {
    width: 9px;
    height: 8px;
    fill: none;
    stroke: #222;
}

.drawing {
    position: absolute;
    left: 0;
    top: 0;
    height: 100%;
}

.command {
    height: 44px;
    border-top: 4px solid var(--chrome);
    background: linear-gradient(#f5f5f5, #f0f0f0);
    font: 8px/9px var(--ui);
    color: #111;
}

.status {
    display: flex;
    height: 13px;
    line-height: 13px;
    background: linear-gradient(#c3c6d0, #979ba6);
    color: #222;
}

.status span {
    width: 51px;
    padding-left: 4px;
    border-left: 1px solid #c9ccd5;
}

.status .snap {
    width: 171px;
}

.status .ready {
    flex: 1;
}

/* Taskbar */
.taskbar {
    display: grid;
    grid-template-columns: 1fr auto 1fr;
    align-items: center;
    height: 32px;
    background: #dcdcdc;
    font-size: 8px;
    line-height: 11px;
}

.weather {
    display: flex;
    align-items: center;
    gap: 5px;
    padding-left: 12px;
    color: #666;
}

.weather svg {
    width: 16px;
    height: 12px;
}

.weather strong {
    color: #222;
    font-weight: normal;
}

.task-center {
    display: flex;
    align-items: center;
    padding-left: 8px;
}

.start svg {
    width: 16px;
    height: 16px;
}

.search {
    display: flex;
    align-items: center;
    width: 145px;
    height: 20px;
    margin-left: 9px;
    padding: 0 4px 0 7px;
    border-radius: 10px;
    background: #f5f5f5;
}

.search svg {
    width: 10px;
    height: 10px;
}

.search .scene {
    width: 28px;
    height: 16px;
}

.search input {
    flex: 1;
    min-width: 0;
    padding-left: 7px;
    border: none;
    background: none;
    font: 9px var(--ui);
}

.tasks {
    display: flex;
    width: 472px;
}

.tasks button {
    position: relative;
    flex: 1;
    display: flex;
    justify-content: center;
    padding: 5px 0;
}

.tasks svg {
    width: 16px;
    height: 16px;
}

.tasks .open::after {
    content: "";
    position: absolute;
    bottom: 0;
    width: 4px;
    height: 2px;
    border-radius: 1px;
    background: #777;
}

.tasks .current svg {
    outline: 4px solid #efefef;
    background: #efefef;
}

.tasks .current::after {
    width: 10px;
    background: #1672b8;
}

.badge {
    position: absolute;
    top: 3px;
    right: 4px;
    width: 9px;
    height: 9px;
    border-radius: 50%;
    background: #f00b16;
}

.badge.ring {
    border: 3px solid #d3465c;
    background: #fff;
}

.ps {
    font: bold 8px var(--doc);
    fill: #55b7f5;
    text-anchor: middle;
}

.tray {
    display: flex;
    align-items: center;
    justify-content: flex-end;
    gap: 6px;
    padding-right: 13px;
    color: #222;
    text-align: right;
}

.tray svg {
    width: 10px;
    height: 10px;
}

.tray .mic {
    margin: 0 6px;
}

.tray .battery {
    width: 14px;
}

.tray time {
    margin-left: 5px;
}

/* Parameter window */
.dialog {
    position: absolute;
    inset: 6px 140px 43px;
    display: flex;
    flex-direction: column;
    border-radius: 5px;
    overflow: hidden;
    background: #fff;
    box-shadow: 0 0 1px #555, 0 4px 14px rgba(0, 0, 0, 0.35);
}

.dialog-title {
    display: flex;
    align-items: center;
    height: 20px;
    padding: 0 6px;
    background: #f3f3f3;
    color: #111;
}

.dialog-title > svg {
    width: 9px;
    height: 9px;
    margin-right: 5px;
}

.dialog-title button {
    margin-left: auto;
}

.dialog-title button svg {
    width: 8px;
    height: 8px;
}

.dialog-body {
    flex: 1;
    min-height: 0;
    display: flex;
    font-family: var(--doc);
}

.steps {
    width: 200px;
    display: grid;
    grid-template-rows: repeat(16, 1fr) 15px;
    background: var(--dark);
}

.steps > * {
    border-bottom: 1px solid #484848;
}

.steps a {
    display: grid;
    grid-template-columns: 1fr auto;
    align-content: start;
    padding: 6px 9px 0 10px;
    color: #e8e8e8;
    font-size: 8px;
    font-weight: bold;
    line-height: 12px;
    text-decoration: none;
}

.steps b {
    grid-column: 1 / 3;
    font-size: 11px;
}

.steps .tick {
    font-family: "DejaVu Sans", sans-serif;
}

.steps em {
    font-style: normal;
}

.steps .active {
    padding-left: 5px;
    border-left: 5px solid var(--red);
    background: linear-gradient(90deg, #8c2030, #634449 45%, #333 95%);
}

.content {
    flex: 1;
    display: flex;
    flex-direction: column;
    padding: 62px 60px 15px;
    color: #1c1c1c;
}

.intro {
    padding: 0 3px;
    font-size: 12px;
    font-style: italic;
    line-height: 12px;
    text-align: center;
}

h1 {
    margin: 24px 0 32px;
    font-size: 15px;
    line-height: 16px;
    text-align: center;
}

table {
    width: 100%;
    table-layout: fixed;
    border-collapse: collapse;
    font-size: 11px;
    text-align: center;
}

caption {
    padding-bottom: 13px;
    font-size: 15px;
    line-height: 15px;
}

.c1 {
    width: 120px;
}

.c2 {
    width: 233px;
}

.c3 {
    width: 159px;
}

th,
td {
    height: 28px;
    padding-left: 6px;
    border: 1px solid var(--line);
    line-height: 14px;
    white-space: nowrap;
}

th {
    height: 25px;
    padding-bottom: 2px;
    font-size: 12px;
    font-weight: normal;
}

.first {
    text-align: left;
}

td:nth-child(n + 2) {
    padding-bottom: 4px;
}

.off {
    color: #c2c2c2;
    background: repeating-linear-gradient(135deg, #fff 0 7px, #f1f1f1 7px 9px);
    background-clip: padding-box;
}

.selected {
    font-weight: bold;
    color: #000;
}

.selected td:first-child {
    background: #fbd5cd;
}

.selected td:nth-child(2) {
    background: linear-gradient(90deg, #fcd9d1, #fdebe4);
}

.selected .off {
    color: #b9b9b9;
}

.legend {
    margin-top: 12px;
    font-size: 11px;
    font-style: italic;
    line-height: 11px;
}

.pager {
    display: flex;
    justify-content: space-between;
    margin-top: auto;
    padding: 0 20px;
}

.pager svg {
    width: 30px;
    height: 24px;
    fill: none;
    stroke: #2c2727;
    stroke-width: 3px;
    stroke-linecap: round;
    stroke-linejoin: round;
}

.cursor {
    position: absolute;
    left: 1002px;
    top: 600px;
    width: 9px;
    height: 13px;
}
```
